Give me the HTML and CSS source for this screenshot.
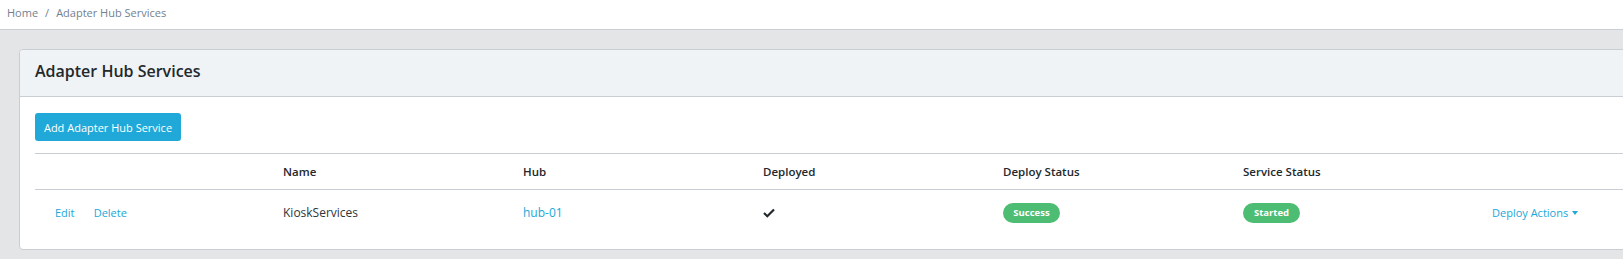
FILE: index.html
```html
<!DOCTYPE html>
<html lang="en">
<head>
    <meta charset="UTF-8">
    <meta name="viewport" content="width=device-width, initial-scale=1.0">
    <title>Adapter Hub Services</title>
    <link rel="stylesheet" href="styles.css">
</head>
<body>
    <nav class="breadcrumb">
        <a href="#" class="crumb">Home</a>
        <span class="crumb-sep">/</span>
        <span class="crumb active">Adapter Hub Services</span>
    </nav>

    <main class="content">
        <div class="card">
            <div class="card-header">
                <h4>Adapter Hub Services</h4>
            </div>
            <div class="card-body">
                <button class="btn-add">Add Adapter Hub Service</button>

                <table class="services">
                    <colgroup>
                        <col class="col-first">
                        <col><col><col><col><col><col>
                    </colgroup>
                    <thead>
                        <tr>
                            <th></th>
                            <th>Name</th>
                            <th>Hub</th>
                            <th>Deployed</th>
                            <th>Deploy Status</th>
                            <th>Service Status</th>
                            <th></th>
                        </tr>
                    </thead>
                    <tbody>
                        <tr>
                            <td>
                                <a href="#" class="row-link">Edit</a>
                                <a href="#" class="row-link">Delete</a>
                            </td>
                            <td class="name-cell">KioskServices</td>
                            <td><a href="#" class="hub-link">hub-01</a></td>
                            <td>
                                <svg class="check" width="12" height="10" viewBox="0 0 12 10">
                                    <path d="M1 5 L4.3 8.2 L11 1.5" fill="none" stroke="#23282c" stroke-width="2.2"/>
                                </svg>
                            </td>
                            <td><span class="pill">Success</span></td>
                            <td><span class="pill">Started</span></td>
                            <td><button class="btn-actions">Deploy Actions<span class="caret"></span></button></td>
                        </tr>
                    </tbody>
                </table>
            </div>
        </div>
    </main>
</body>
</html>
```

FILE: styles.css
```css
body {
    margin: 0;
    padding: 0;
    background-color: #e4e5e6;
    color: #23282c;
    font-family: "Open Sans", "Noto Sans", sans-serif;
    font-size: 12px;
    overflow: hidden;
}
a {
    color: #20a8d8;
    text-decoration: none;
}
.breadcrumb {
    display: flex;
    align-items: center;
    box-sizing: border-box;
    height: 30px;
    padding: 0 0 4px 7px;
    background: white;
    border-bottom: 1px solid #c8ced3;
    font-size: 11px;
    line-height: 18px;
}
.crumb, .crumb.active {
    color: #73818f;
}
.crumb-sep {
    color: #73818f;
    padding: 0 7px;
}
.content {
    padding: 19px 0 0 19px;
}
.card {
    width: 1708px;
    background: white;
    border: 1px solid #c8ced3;
    border-radius: 4px;
}
.card-header {
    background: #f0f3f5;
    border-bottom: 1px solid #c8ced3;
    padding: 10px 15px 14px;
    border-radius: 4px 4px 0 0;
}
.card-header h4 {
    margin: 0;
    font-size: 16px;
    font-weight: 600;
    line-height: 22px;
}
.card-body {
    padding: 16px 15px 14px;
}
.btn-add {
    display: block;
    height: 28px;
    width: 146px;
    padding: 0;
    background-color: #20a8d8;
    color: white;
    border: none;
    border-radius: 3px;
    font-family: inherit;
    font-size: 11px;
    cursor: pointer;
}
.services {
    margin-top: 12px;
    width: 1676px;
    table-layout: fixed;
    border-collapse: collapse;
}
.col-first {
    width: 236px;
}
.services th {
    text-align: left;
    font-weight: 600;
    font-size: 11.5px;
    padding: 9px 12px;
    line-height: 17px;
    border-top: 1px solid #c8ced3;
    border-bottom: 1px solid #c8ced3;
}
.services td {
    padding: 12px;
    line-height: 20px;
    vertical-align: middle;
}
.name-cell {
    color: #2f353a;
}
.row-link {
    padding: 0 8px;
    font-size: 11px;
}
.check {
    display: block;
}
.pill {
    display: inline-block;
    width: 57px;
    height: 20px;
    line-height: 20px;
    text-align: center;
    background-color: #4dbd74;
    color: white;
    border-radius: 10px;
    font-size: 9.5px;
    font-weight: 700;
}
.btn-actions {
    background: none;
    border: none;
    padding: 0 9px;
    color: #20a8d8;
    font-family: inherit;
    font-size: 11px;
    cursor: pointer;
}
.caret {
    display: inline-block;
    margin-left: 4px;
    vertical-align: 2px;
    border-top: 4px solid #20a8d8;
    border-left: 3.5px solid transparent;
    border-right: 3.5px solid transparent;
}
```
